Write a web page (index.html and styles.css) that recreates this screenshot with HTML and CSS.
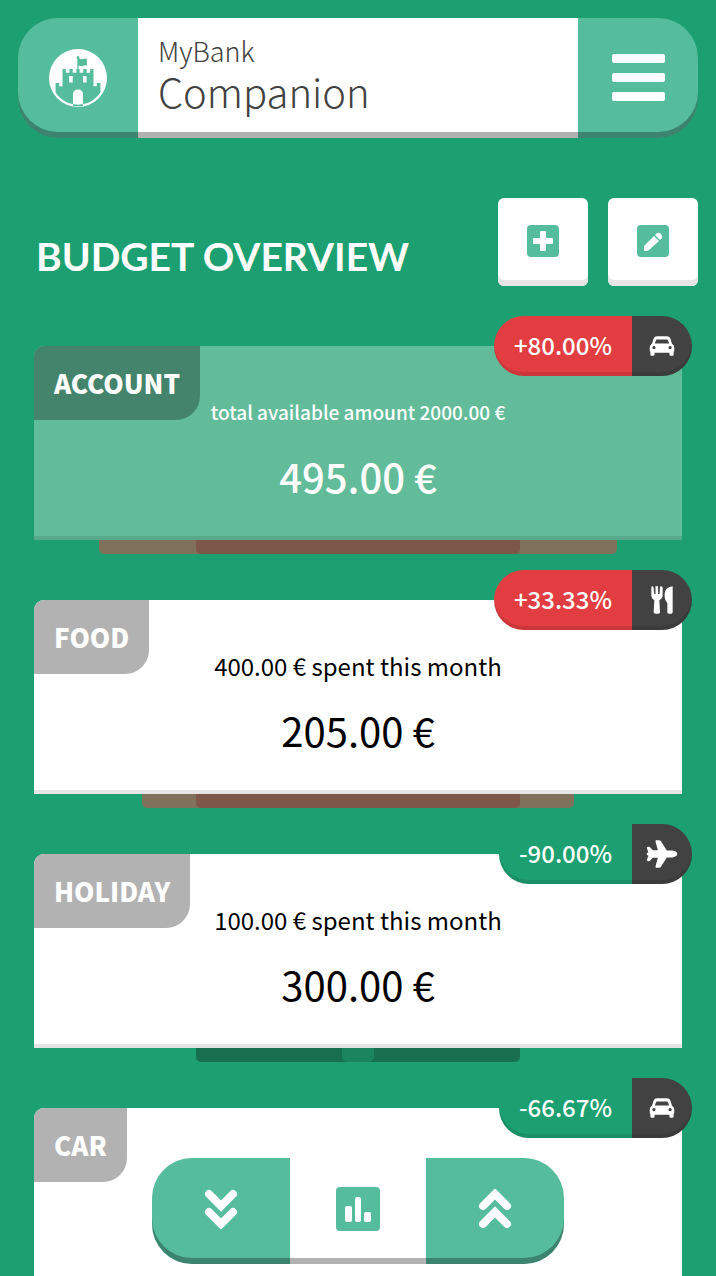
FILE: index.html
```html
<!DOCTYPE html>
<html lang="en">
<head>
<meta charset="utf-8">
<meta name="viewport" content="width=device-width, initial-scale=1">
<title>MyBank Companion</title>
<link rel="stylesheet" href="styles.css">
</head>
<body>
<svg class="symbols" aria-hidden="true">
  <symbol id="car" viewBox="0 0 78 62">
    <path fill-rule="evenodd" d="M24 1H54Q62 1 65 8L70 24Q77 28 77 36V48H75V57Q75 61 71 61H66Q62 61 62 57V52H16V57Q16 61 12 61H7Q3 61 3 57V48H1V36Q1 28 8 24L13 8Q16 1 24 1ZM24 11Q21 11 20 14L17 23H61L58 14Q57 11 54 11ZM14 31a5 5 0 1 0 .1 0ZM64 31a5 5 0 1 0 .1 0Z"/>
  </symbol>
  <symbol id="food" viewBox="0 0 66 84">
    <path d="M1 5Q1 1 4 1T8 5L9 24H11L12 5Q12 1 14 1H20Q22 1 22 5L23 24H25L27 5Q27 1 30 1T35 5V28Q35 38 25 42L27 79Q27 83 22 83H13Q8 83 8 79L10 42Q1 38 1 28ZM65 1V79Q65 83 61 83H53Q49 83 49 79V51Q41 43 41 33V23Q43 3 65 1Z"/>
    <path class="tines" d="M12 2V24M23 2V24"/>
  </symbol>
  <symbol id="plane" viewBox="0 0 92 82">
    <path d="M29 1H37Q41 1 43 4L60 31H76Q91 34 91 41T76 51H60L43 78Q41 81 37 81H29Q26 81 27 77L34 52H19L11 61Q9 63 5 62Q0 61 2 57L6 46Q1 44 1 41T6 36L2 25Q0 21 5 20Q9 19 11 21L19 30H34L27 5Q26 1 29 1Z"/>
  </symbol>
</svg>
<div class="app">
  <header class="topbar">
    <a class="topbar-end logo" href="#" aria-label="Home">
      <svg viewBox="146 144 176 176">
        <circle class="paper" cx="234" cy="232" r="88"/>
        <path class="mint" fill-rule="evenodd" d="M166 247h11v10h10V205h10v11h11v-11h10v11h11v-11h10v11h11v-11h10v11h11v-11h10v52h10v-10h11V276A81 81 0 0 1 166 276ZM207 226v20h11v-20ZM249 226v20h11v-20ZM219 318V282Q219 267 234 267T249 282V318Z"/>
        <path class="mint" d="M232 206V174Q230 172 230 169a4 4 0 0 1 8 0V173Q244 177 250 174Q256 171 261 174V194Q255 192 250 195Q243 198 236 194V206Z"/>
      </svg>
    </a>
    <h1 class="brand"><span class="brand-top">MyBank</span><span class="brand-main">Companion</span></h1>
    <button class="topbar-end menu" type="button" aria-label="Menu">
      <svg viewBox="0 0 54 48"><rect width="53" height="9" x="1" y="0" rx="2"/><rect width="53" height="9" x="1" y="19" rx="2"/><rect width="53" height="9" x="1" y="38" rx="2"/></svg>
    </button>
  </header>
  <main>
    <div class="heading">
      <h2>BUDGET OVERVIEW</h2>
      <div class="tools">
        <button class="tool" type="button" aria-label="Add">
          <svg viewBox="0 0 32 32"><rect class="mint" width="32" height="32" rx="4"/><path class="paper" d="M14 6h4q1 0 1 1v6h6q1 0 1 1v4q0 1-1 1h-6v6q0 1-1 1h-4q-1 0-1-1v-6H7q-1 0-1-1v-4q0-1 1-1h6V7q0-1 1-1Z"/></svg>
        </button>
        <button class="tool" type="button" aria-label="Edit">
          <svg viewBox="0 0 32 32"><rect class="mint" width="32" height="32" rx="4"/><path class="paper" d="M7 21L17 11L22 16L12 25Q11 26 9 26H8Q7 26 7 25ZM18 10L20 8Q22 7 24 9Q26 11 25 13L23 15Z"/></svg>
        </button>
      </div>
    </div>
    <section class="budgets">
      <article class="budget over">
        <div class="card account">
          <h3>ACCOUNT</h3>
          <p class="note">total available amount 2000.00 €</p>
          <p class="amount">495.00 €</p>
        </div>
        <div class="badge"><span class="percent">+80.00%</span><span class="kind"><svg class="icon-car"><use href="#car"/></svg></span></div>
        <div class="gauge"><span class="spent" style="width:80%"></span><span class="half"></span></div>
      </article>
      <article class="budget over">
        <div class="card">
          <h3>FOOD</h3>
          <p class="note">400.00 € spent this month</p>
          <p class="amount">205.00 €</p>
        </div>
        <div class="badge"><span class="percent">+33.33%</span><span class="kind"><svg class="icon-food"><use href="#food"/></svg></span></div>
        <div class="gauge"><span class="spent" style="width:66.67%"></span><span class="half"></span></div>
      </article>
      <article class="budget under">
        <div class="card">
          <h3>HOLIDAY</h3>
          <p class="note">100.00 € spent this month</p>
          <p class="amount">300.00 €</p>
        </div>
        <div class="badge"><span class="percent">-90.00%</span><span class="kind"><svg class="icon-plane"><use href="#plane"/></svg></span></div>
        <div class="gauge"><span class="half"></span><span class="spent" style="width:5%"></span></div>
      </article>
      <article class="budget under">
        <div class="card">
          <h3>CAR</h3>
        </div>
        <div class="badge"><span class="percent">-66.67%</span><span class="kind"><svg class="icon-car"><use href="#car"/></svg></span></div>
      </article>
    </section>
  </main>
</div>
<nav class="dock" aria-label="Budget navigation">
  <button class="dock-end left" type="button" aria-label="Next">
    <svg viewBox="0 0 34 40"><path class="chevron" d="M5 5L17 17L29 5M5 23L17 35L29 23"/></svg>
  </button>
  <button class="dock-middle" type="button" aria-label="Chart">
    <svg viewBox="0 0 44 44"><rect class="mint" width="44" height="44" rx="4"/><g class="paper"><rect x="9" y="19" width="7" height="16" rx="2"/><rect x="19" y="10" width="6" height="25" rx="2"/><rect x="28" y="25" width="7" height="10" rx="2"/></g></svg>
  </button>
  <button class="dock-end right" type="button" aria-label="Previous">
    <svg viewBox="0 0 34 40"><path class="chevron" d="M5 17L17 5L29 17M5 35L17 23L29 35"/></svg>
  </button>
</nav>
</body>
</html>
```
FILE: styles.css
```css
:root {
  --green: #1da071;
  --mint: #56bd9c;
  --red: #e23e42;
  --dark: #424242;
}

* { box-sizing: border-box; }

body {
  margin: 0;
  background: var(--green);
  color: #000;
  font-family: "Noto Sans CJK SC", "Noto Sans", sans-serif;
}

h1, h2, h3, p { margin: 0; }

button {
  padding: 0;
  border: 0;
  cursor: pointer;
}

svg { display: block; fill: #fff; }

.symbols { position: absolute; width: 0; height: 0; }
.mint { fill: var(--mint); }
.paper { fill: #fff; }
.tines { fill: none; stroke: var(--dark); stroke-width: 3; }

.app {
  height: 100vh;
  padding: 18px;
  overflow-y: auto;
  scrollbar-width: none;
}

.topbar {
  display: flex;
  height: 120px;
}

.topbar-end {
  display: flex;
  flex: 0 0 120px;
  align-items: center;
  justify-content: center;
  background: var(--mint);
  box-shadow: inset 0 -6px rgba(0, 0, 0, .3);
}

.logo { border-radius: 40px 0 0 40px; }
.logo svg { width: 58px; height: 58px; }
.menu { border-radius: 0 40px 40px 0; }
.menu svg { width: 54px; height: 48px; }

.brand {
  display: flex;
  flex: 1;
  flex-direction: column;
  justify-content: center;
  padding: 0 20px 10px;
  background: #fff;
  box-shadow: inset 0 -6px #b2b2b2;
  color: #424242;
  font-weight: 200;
}

.brand-top { font-size: 27px; line-height: 36px; }
.brand-main { font-size: 40px; line-height: 44px; }

.heading {
  display: flex;
  align-items: center;
  justify-content: space-between;
  padding: 60px 0 0 18px;
}

h2 {
  padding-top: 28px;
  color: #fff;
  font: 700 39px/48px Lato, sans-serif;
}

.tools { display: flex; gap: 20px; }

.tool {
  display: grid;
  place-items: center;
  width: 90px;
  height: 88px;
  padding-bottom: 2px;
  border-radius: 6px;
  background: #fff;
  box-shadow: inset 0 -6px #e5e5e5;
}

.tool svg { width: 32px; height: 32px; }

.budgets {
  display: grid;
  gap: 46px;
  padding: 60px 16px 0;
}

.budget { position: relative; }

.card {
  min-height: 194px;
  border-radius: 10px 0 0;
  background: #fff;
  box-shadow: inset 0 -4px #e5e5e5;
  text-align: center;
}

.budget:last-child { padding-bottom: 14px; }

h3 {
  width: fit-content;
  padding: 0 20px;
  border-radius: 10px 0 24px;
  background: #b2b2b2;
  color: #fff;
  font-size: 26px;
  font-weight: 900;
  line-height: 74px;
}

.note {
  margin-top: -26px;
  font-size: 24px;
  line-height: 36px;
}

.amount {
  padding: 16px 0 34px;
  font-size: 40px;
  line-height: 60px;
}

.account {
  background: #62bc9a;
  box-shadow: inset 0 -4px #58a98b;
  color: #fff;
  font-weight: 500;
}

.account h3 { background: #45846c; }
.account .note { font-size: 19px; }

.badge {
  position: absolute;
  top: -30px;
  right: -10px;
  display: flex;
  height: 60px;
  color: #fff;
  font-size: 24px;
  font-weight: 500;
  line-height: 57px;
}

.percent {
  padding: 0 20px;
  border-radius: 30px 0 0 30px;
  box-shadow: inset 0 -4px rgba(0, 0, 0, .1);
}

.over .percent { background: var(--red); }
.under .percent { background: var(--green); }

.kind {
  display: grid;
  place-items: center;
  width: 60px;
  border-radius: 0 30px 30px 0;
  background: var(--dark);
  box-shadow: inset 0 -4px rgba(0, 0, 0, .1);
}

.icon-car { width: 26px; height: 20px; }
.icon-food { width: 22px; height: 28px; }
.icon-plane { width: 32px; height: 28px; }

.gauge {
  display: grid;
  justify-items: center;
  height: 14px;
}

.gauge span {
  grid-area: 1 / 1;
  border-radius: 0 0 5px 5px;
}

.half { width: 50%; }
.over .spent { background: #7f715a; }
.over .half { background: #7d5748; }
.under .half { background: #176f4f; }
.under .spent { background: #1a855f; }

.dock {
  position: fixed;
  bottom: 12px;
  left: 50%;
  display: flex;
  height: 106px;
  transform: translateX(-50%);
}

.dock button {
  display: grid;
  place-items: center;
  padding-bottom: 4px;
}

.dock-end {
  width: 138px;
  background: var(--mint);
  box-shadow: inset 0 -6px rgba(0, 0, 0, .3);
}

.dock-end svg { width: 34px; height: 40px; }

.dock-middle {
  width: 136px;
  background: #fff;
  box-shadow: inset 0 -6px #b2b2b2;
}

.dock-middle svg { width: 44px; height: 44px; }

.dock .left { border-radius: 40px 0 0 40px; }
.dock .right { border-radius: 0 40px 40px 0; }

.chevron {
  fill: none;
  stroke: #fff;
  stroke-width: 8;
  stroke-linecap: round;
}
```
